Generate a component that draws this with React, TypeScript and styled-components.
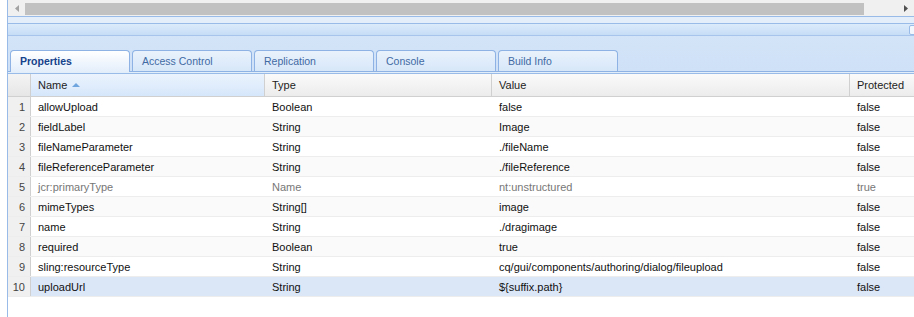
import React from 'react';
import styled, { createGlobalStyle } from 'styled-components';

// Types
interface PropRow {
  name: string;
  type: string;
  value: string;
  protectedValue: string;
  system?: boolean;
}

const GlobalStyle = createGlobalStyle`
  html, body {
    margin: 0;
    padding: 0;
    background: #fff;
  }
  body {
    font-family: 'Liberation Sans', Arial, sans-serif;
    font-size: 11px;
    color: #111;
  }
`;

const COLUMNS = '23px 234px 227px 358px 1fr';

// Styled Components
const Frame = styled.div`
  margin-left: 7px;
  border-left: 1px solid #99bbe8;
  height: 317px;
  overflow: hidden;
  box-sizing: border-box;
`;

const HScroll = styled.div`
  height: 16px;
  background: #f0f0f0;
  display: flex;
  align-items: center;
`;

const ScrollArrow = styled.div<{ $active?: boolean }>`
  width: 17px;
  height: 16px;
  display: flex;
  align-items: center;
  justify-content: center;
  color: ${(p) => (p.$active ? '#505050' : '#a3a3a3')};
  flex-shrink: 0;
`;

const ScrollTrack = styled.div`
  flex: 1;
  height: 16px;
  display: flex;
  align-items: center;
`;

const ScrollThumb = styled.div`
  width: 839px;
  height: 12px;
  margin-top: 1px;
  background: #c1c1c1;
`;

const TopBand = styled.div`
  height: 6px;
  background: #e4eefb;
  border-top: 1px solid #99bbe8;
  border-bottom: 1px solid #99bbe8;
`;

const PanelHeader = styled.div`
  height: 11px;
  background: linear-gradient(#dcebfb, #c6ddf6);
  border-bottom: 1px solid #a7c5ec;
  display: flex;
  justify-content: flex-end;
  align-items: center;
`;

const HeaderTool = styled.div`
  width: 6px;
  height: 8px;
  margin-right: -3px;
  border: 1px solid #99bbe8;
  border-radius: 2px;
  background: #f2f7fd;
`;

const TabStrip = styled.div`
  display: flex;
  gap: 2px;
  padding: 14px 0 0 2px;
  background: linear-gradient(#d3e4f8, #cfe1f7);
  border-bottom: 1px solid #8db2e3;
`;

const Tab = styled.div<{ $active?: boolean }>`
  width: 120px;
  height: 21px;
  box-sizing: border-box;
  border: 1px solid #8db2e3;
  border-bottom: none;
  border-radius: 4px 4px 0 0;
  padding: 3px 0 0 9px;
  font-family: 'Liberation Sans', Arial, sans-serif;
  font-size: 10.5px;
  line-height: 15px;
  background: ${(p) =>
    p.$active
      ? 'linear-gradient(#ffffff, #e3eefb)'
      : 'linear-gradient(#e9f2fc, #d7e7f9)'};
  color: ${(p) => (p.$active ? '#15428b' : '#416aa3')};
  font-weight: ${(p) => (p.$active ? 'bold' : 'normal')};
  ${(p) => (p.$active ? 'margin-bottom: -1px; height: 22px;' : '')}
`;

const StripGap = styled.div`
  height: 1px;
  background: #e3eefb;
  border-bottom: 1px solid #99bbe8;
`;

const GridHeader = styled.div`
  display: grid;
  grid-template-columns: ${COLUMNS};
  height: 22px;
  background: linear-gradient(#fafafa, #ececec);
  border-bottom: 1px solid #d0d0d0;
`;

const HeaderCell = styled.div<{ $sorted?: boolean }>`
  display: flex;
  align-items: center;
  gap: 5px;
  padding-left: 7px;
  font-size: 11px;
  color: #222;
  border-right: 1px solid #d0d0d0;
  background: ${(p) =>
    p.$sorted ? 'linear-gradient(#ebf3fd, #d6e7fb)' : 'transparent'};
  &:last-child {
    border-right: none;
  }
`;

const NumberHeader = styled.div`
  background: linear-gradient(#f4f4f4, #e6e6e6);
  border-right: 1px solid #d0d0d0;
`;

const SortArrow = styled.span`
  width: 0;
  height: 0;
  border-left: 4px solid transparent;
  border-right: 4px solid transparent;
  border-bottom: 4px solid #6ea5de;
`;

const Row = styled.div<{ $alt?: boolean; $selected?: boolean }>`
  display: grid;
  grid-template-columns: ${COLUMNS};
  height: 20px;
  box-sizing: border-box;
  border-bottom: 1px solid #ededed;
  background: ${(p) =>
    p.$selected ? '#dbe6f7' : p.$alt ? '#fafafa' : '#fff'};
`;

const Cell = styled.div<{ $muted?: boolean }>`
  display: flex;
  align-items: center;
  padding-left: 7px;
  font-size: 11px;
  color: ${(p) => (p.$muted ? '#777' : '#111')};
  white-space: nowrap;
  overflow: hidden;
`;

const NumberCell = styled.div`
  display: flex;
  align-items: center;
  justify-content: flex-end;
  padding-right: 5px;
  font-size: 11px;
  color: #444;
  background: #f0f0f0;
  border-right: 1px solid #d0d0d0;
`;

const rows: PropRow[] = [
  { name: 'allowUpload', type: 'Boolean', value: 'false', protectedValue: 'false' },
  { name: 'fieldLabel', type: 'String', value: 'Image', protectedValue: 'false' },
  { name: 'fileNameParameter', type: 'String', value: './fileName', protectedValue: 'false' },
  { name: 'fileReferenceParameter', type: 'String', value: './fileReference', protectedValue: 'false' },
  { name: 'jcr:primaryType', type: 'Name', value: 'nt:unstructured', protectedValue: 'true', system: true },
  { name: 'mimeTypes', type: 'String[]', value: 'image', protectedValue: 'false' },
  { name: 'name', type: 'String', value: './dragimage', protectedValue: 'false' },
  { name: 'required', type: 'Boolean', value: 'true', protectedValue: 'false' },
  { name: 'sling:resourceType', type: 'String', value: 'cq/gui/components/authoring/dialog/fileupload', protectedValue: 'false' },
  { name: 'uploadUrl', type: 'String', value: '${suffix.path}', protectedValue: 'false' },
];

const tabs = ['Properties', 'Access Control', 'Replication', 'Console', 'Build Info'];

export default function App() {
  return (
    <>
      <GlobalStyle />
      <Frame>
        <HScroll>
          <ScrollArrow>
            <svg width="4" height="7" viewBox="0 0 4 7">
              <path d="M4 0 L0 3.5 L4 7 Z" fill="currentColor" />
            </svg>
          </ScrollArrow>
          <ScrollTrack>
            <ScrollThumb />
          </ScrollTrack>
          <ScrollArrow $active>
            <svg width="4" height="7" viewBox="0 0 4 7">
              <path d="M0 0 L4 3.5 L0 7 Z" fill="currentColor" />
            </svg>
          </ScrollArrow>
        </HScroll>

        <TopBand />
        <PanelHeader>
          <HeaderTool />
        </PanelHeader>

        <TabStrip>
          {tabs.map((t, i) => (
            <Tab key={t} $active={i === 0}>
              {t}
            </Tab>
          ))}
        </TabStrip>
        <StripGap />

        <GridHeader>
          <NumberHeader />
          <HeaderCell $sorted>
            Name <SortArrow />
          </HeaderCell>
          <HeaderCell>Type</HeaderCell>
          <HeaderCell>Value</HeaderCell>
          <HeaderCell>Protected</HeaderCell>
        </GridHeader>

        {rows.map((r, i) => (
          <Row key={r.name} $alt={i % 2 === 1} $selected={i === rows.length - 1}>
            <NumberCell>{i + 1}</NumberCell>
            <Cell $muted={r.system}>{r.name}</Cell>
            <Cell $muted={r.system}>{r.type}</Cell>
            <Cell $muted={r.system}>{r.value}</Cell>
            <Cell $muted={r.system}>{r.protectedValue}</Cell>
          </Row>
        ))}
      </Frame>
    </>
  );
}
